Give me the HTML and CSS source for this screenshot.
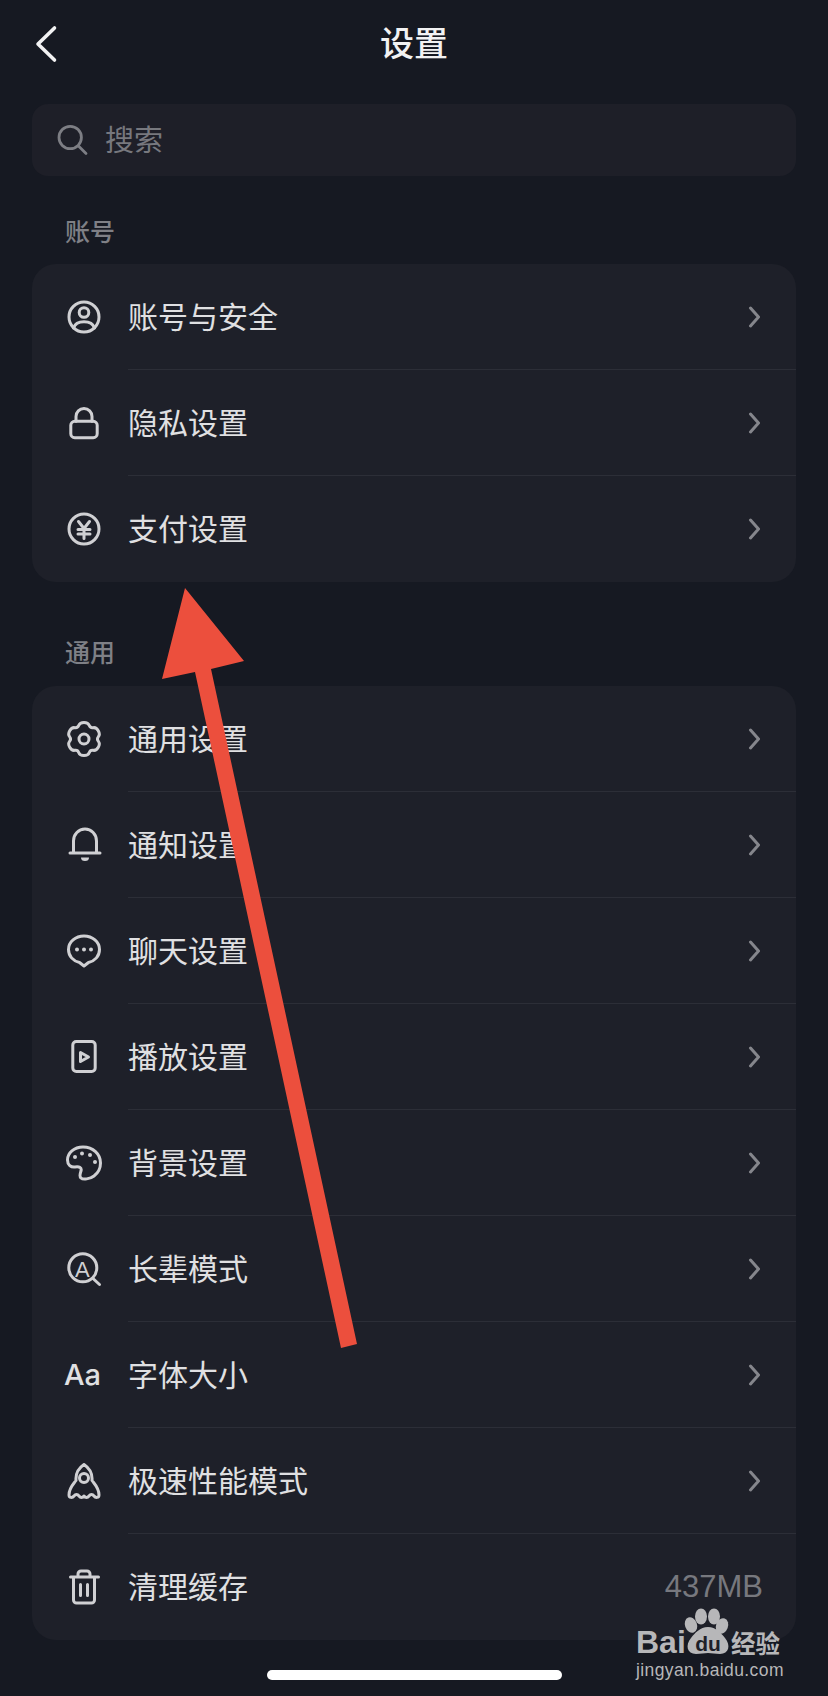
FILE: index.html
```html
<!DOCTYPE html>
<html lang="zh-CN">
<head>
  <meta charset="UTF-8">
  <meta name="viewport" content="width=device-width, initial-scale=1.0">
  <title>设置</title>
  <link rel="stylesheet" href="styles.css">
</head>
<body>
  <div class="page">
    <header class="top-bar">
      <svg class="back" viewBox="0 0 24 40"><path d="M20.500 4 L4 20 L20.500 36"/></svg>
      <h1 class="title">设置</h1>
    </header>

    <div class="search">
      <svg class="search-icon" viewBox="0 0 32 32"><circle cx="14.200" cy="13.500" r="11.200"/><path d="M22.500 22 L30 29.500"/></svg>
      <span class="search-text">搜索</span>
    </div>

    <div class="section-label">账号</div>
    <ul class="card">
      <li class="row">
        <svg class="icon" viewBox="0 0 36 36"><circle cx="18" cy="18" r="15"/><circle cx="18" cy="13.500" r="4.800"/><path d="M7.500 29 C9 24.500 13 22.800 18 22.800 S27 24.500 28.500 29"/></svg>
        <div class="row-body"><span class="row-label">账号与安全</span><svg class="chevron" viewBox="0 0 16 24"><path d="M6.500 3 L14.500 12 L6.500 21"/></svg></div>
      </li>
      <li class="row">
        <svg class="icon" viewBox="0 0 36 36"><rect x="4.800" y="16.300" width="26.400" height="16.400" rx="4"/><path d="M10 16.300 V11.500 a8 8 0 0 1 16 0 V16.300"/></svg>
        <div class="row-body"><span class="row-label">隐私设置</span><svg class="chevron" viewBox="0 0 16 24"><path d="M6.500 3 L14.500 12 L6.500 21"/></svg></div>
      </li>
      <li class="row">
        <svg class="icon" viewBox="0 0 36 36"><circle cx="18" cy="18" r="15"/><path d="M12.500 10.500 L18 17.500 L23.500 10.500 M12 18.500 H24 M12 23 H24 M18 17.500 V27.500"/></svg>
        <div class="row-body"><span class="row-label">支付设置</span><svg class="chevron" viewBox="0 0 16 24"><path d="M6.500 3 L14.500 12 L6.500 21"/></svg></div>
      </li>
    </ul>

    <div class="section-label section-label-gap">通用</div>
    <ul class="card">
      <li class="row">
        <svg class="icon" viewBox="0 0 36 36"><path d="M18 1.500 Q22.110 1.500 23.180 4.330 Q24.250 7.170 27.240 6.680 Q30.230 6.190 32.280 9.750 Q34.340 13.310 32.420 15.650 Q30.500 18 32.420 20.350 Q34.340 22.690 32.280 26.250 Q30.230 29.810 27.240 29.320 Q24.250 28.830 23.180 31.670 Q22.110 34.500 18 34.500 Q13.890 34.500 12.820 31.670 Q11.750 28.830 8.760 29.320 Q5.770 29.810 3.720 26.250 Q1.660 22.690 3.580 20.350 Q5.500 18 3.580 15.650 Q1.660 13.310 3.720 9.750 Q5.770 6.190 8.760 6.680 Q11.750 7.170 12.820 4.330 Q13.890 1.500 18 1.500 Z"/><circle cx="18" cy="18" r="5"/></svg>
        <div class="row-body"><span class="row-label">通用设置</span><svg class="chevron" viewBox="0 0 16 24"><path d="M6.500 3 L14.500 12 L6.500 21"/></svg></div>
      </li>
      <li class="row">
        <svg class="icon" viewBox="0 0 36 36"><path d="M7.500 26 V14 a11.500 12 0 0 1 23 0 V26 M4 26 H34"/><path class="solid" d="M15 30.500 H23 a4 3.500 0 0 1 -8 0 Z"/></svg>
        <div class="row-body"><span class="row-label">通知设置</span><svg class="chevron" viewBox="0 0 16 24"><path d="M6.500 3 L14.500 12 L6.500 21"/></svg></div>
      </li>
      <li class="row">
        <svg class="icon" viewBox="0 0 36 36"><path d="M13.500 29.500 C7 28 2.500 23 2.500 16.500 C2.500 9 9.500 3 18 3 S33.500 9 33.500 16.500 C33.500 23 29 28 22.500 29.500 L18 33 Z"/><circle class="solid" cx="11" cy="16.500" r="2"/><circle class="solid" cx="18" cy="16.500" r="2"/><circle class="solid" cx="25" cy="16.500" r="2"/></svg>
        <div class="row-body"><span class="row-label">聊天设置</span><svg class="chevron" viewBox="0 0 16 24"><path d="M6.500 3 L14.500 12 L6.500 21"/></svg></div>
      </li>
      <li class="row">
        <svg class="icon" viewBox="0 0 36 36"><rect x="6.800" y="2.500" width="22.400" height="30" rx="3.500"/><path d="M14.500 13.500 L22.500 18 L14.500 22.500 Z"/></svg>
        <div class="row-body"><span class="row-label">播放设置</span><svg class="chevron" viewBox="0 0 16 24"><path d="M6.500 3 L14.500 12 L6.500 21"/></svg></div>
      </li>
      <li class="row">
        <svg class="icon" viewBox="0 0 36 36"><path d="M17 2 C8 2 1.500 8 1.500 15 C1.500 20 5 22.500 9 22 C13 21.500 16 22 15 26 C14 29 13 31.500 15 33 C17 35 24 34 28 31 C32 28 34.500 23 34.500 18 C34.500 9 27 2 17 2 Z"/><circle class="solid" cx="9" cy="12" r="2"/><circle class="solid" cx="16" cy="8.500" r="2"/><circle class="solid" cx="24" cy="10" r="2"/><circle class="solid" cx="29" cy="17" r="2"/></svg>
        <div class="row-body"><span class="row-label">背景设置</span><svg class="chevron" viewBox="0 0 16 24"><path d="M6.500 3 L14.500 12 L6.500 21"/></svg></div>
      </li>
      <li class="row">
        <svg class="icon" viewBox="0 0 36 36"><circle cx="16.800" cy="16.800" r="14"/><path d="M27 27.500 L33.500 33.500"/><text class="icon-letter" x="16.300" y="25.500" text-anchor="middle">A</text></svg>
        <div class="row-body"><span class="row-label">长辈模式</span><svg class="chevron" viewBox="0 0 16 24"><path d="M6.500 3 L14.500 12 L6.500 21"/></svg></div>
      </li>
      <li class="row">
        <div class="icon icon-text">Aa</div>
        <div class="row-body"><span class="row-label">字体大小</span><svg class="chevron" viewBox="0 0 16 24"><path d="M6.500 3 L14.500 12 L6.500 21"/></svg></div>
      </li>
      <li class="row">
        <svg class="icon" viewBox="0 0 36 36"><path d="M18 1.500 C24 5.500 26.500 11 26 17.500 C28.500 21 33 25 33 32 C33 35 29.500 35 28 33 C26.500 31 24.500 31 23 33 C21.500 35 19.500 35 18 33 C16.500 35 14.500 35 13 33 C11.500 31 9.500 31 8 33 C6.500 35 3 35 3 32 C3 25 7.500 21 10 17.500 C9.500 11 12 5.500 18 1.500 Z"/><circle cx="18" cy="15" r="4.500"/></svg>
        <div class="row-body"><span class="row-label">极速性能模式</span><svg class="chevron" viewBox="0 0 16 24"><path d="M6.500 3 L14.500 12 L6.500 21"/></svg></div>
      </li>
      <li class="row">
        <svg class="icon" viewBox="0 0 36 36"><path d="M4.500 8 H32.500 M12 8 V5 a3 3 0 0 1 3 -3 H21 a3 3 0 0 1 3 3 V8 M7.500 8 V31 a3 3 0 0 0 3 3 H25.500 a3 3 0 0 0 3 -3 V8 M14.500 15.500 V26.500 M21.500 15.500 V26.500"/></svg>
        <div class="row-body row-last"><span class="row-label">清理缓存</span><span class="size">437MB</span></div>
      </li>
    </ul>

    <!-- red arrow drawn over the list -->
    <svg class="arrow" viewBox="0 0 828 1696"><polygon points="185,588 244,661 211,669 357,1344 341,1348 195,672 162,679"/></svg>

    <!-- watermark -->
    <svg class="watermark" viewBox="0 0 160 90">
      <text class="wm-bai" x="6" y="52">Bai</text>
      <ellipse cx="61" cy="24" rx="6" ry="8" transform="rotate(-20 61 24)"/>
      <ellipse cx="71" cy="15.500" rx="6" ry="8"/>
      <ellipse cx="84" cy="15.500" rx="6" ry="8"/>
      <ellipse cx="92" cy="25" rx="6" ry="8" transform="rotate(20 92 25)"/>
      <path d="M78 26 C86 26 91 32 95 37 C101 44 99 53 90 53 C85 53 82 52 78 52 C74 52 71 53 66 53 C57 53 55 44 61 37 C65 32 70 26 78 26 Z"/>
      <text class="wm-du" x="78" y="50" text-anchor="middle">du</text>
      <text class="wm-cn" x="101" y="52">经验</text>
      <text class="wm-url" x="6" y="75">jingyan.baidu.com</text>
    </svg>

    <div class="home-bar"></div>
  </div>
</body>
</html>
```

FILE: styles.css
```css
html, body {
  margin: 0;
  padding: 0;
  height: 100%;
  background-color: #161922;
  overflow: hidden;
  font-family: "Noto Sans CJK SC", "Liberation Sans", sans-serif;
  color: #e0e0e2;
}

.page {
  position: relative;
  width: 828px;
  height: 1696px;
  padding: 0 32px;
  box-sizing: border-box;
}

.top-bar {
  height: 104px;
  margin: 0 -32px;
  display: flex;
  justify-content: center;
  align-items: flex-start;
  position: relative;
}

.back {
  position: absolute;
  left: 34px;
  top: 24px;
  width: 24px;
  height: 40px;
  fill: none;
  stroke: #f2f2f3;
  stroke-width: 3.6;
  stroke-linecap: round;
  stroke-linejoin: round;
}

.title {
  margin: 0;
  margin-top: 18px;
  font-size: 34px;
  line-height: 48px;
  font-weight: 500;
  color: #f2f2f3;
}

.search {
  height: 72px;
  padding-left: 24px;
  display: flex;
  align-items: center;
  gap: 17px;
  background-color: #1e1f28;
  border-radius: 16px;
  font-size: 29px;
  color: #77787e;
}

.search-text {
  margin-bottom: 4px;
}

.search-icon {
  width: 32px;
  height: 32px;
  fill: none;
  stroke: #7d7e84;
  stroke-width: 2.8;
  stroke-linecap: round;
}

.section-label {
  height: 88px;
  padding: 36px 0 0 33px;
  box-sizing: border-box;
  font-size: 25px;
  font-weight: 500;
  line-height: 36px;
  color: #7f8086;
}

.section-label-gap {
  height: 104px;
  padding-top: 51px;
}

.card {
  list-style: none;
  margin: 0;
  padding: 0;
  background-color: #1e2029;
  border-radius: 24px;
}

.row {
  height: 106px;
  padding-left: 34px;
  display: flex;
  align-items: center;
}

.icon {
  width: 36px;
  height: 36px;
  flex-shrink: 0;
  fill: none;
  stroke: #d0d0d3;
  stroke-width: 3;
  stroke-linecap: round;
  stroke-linejoin: round;
}

.icon .solid {
  fill: #d0d0d3;
  stroke: none;
}

.icon-letter {
  font-family: "Liberation Sans", sans-serif;
  font-size: 22px;
  fill: #d0d0d3;
  stroke: none;
}

.icon-text {
  font-family: "Inter", "Liberation Sans", sans-serif;
  font-size: 29px;
  font-weight: 500;
  line-height: 36px;
  color: #e0e0e2;
  text-indent: -2px;
  white-space: nowrap;
}

.row-body {
  flex: 1;
  height: 100%;
  margin-left: 26px;
  padding-right: 36px;
  box-sizing: border-box;
  display: flex;
  justify-content: space-between;
  align-items: center;
  border-bottom: 1px solid #2c2e37;
  font-size: 30px;
}

.row-last {
  padding-right: 33px;
}

.row:last-child .row-body {
  border-bottom: none;
}

.row-label {
  margin-bottom: 4px;
}

.chevron {
  width: 16px;
  height: 24px;
  fill: none;
  stroke: #85868c;
  stroke-width: 3;
  stroke-linecap: round;
  stroke-linejoin: round;
}

.size {
  font-family: "Liberation Sans", sans-serif;
  font-size: 31px;
  color: #77787e;
}

.arrow {
  position: absolute;
  left: 0;
  top: 0;
  width: 828px;
  height: 1696px;
  fill: #ec4f3d;
  pointer-events: none;
}

.watermark {
  position: absolute;
  left: 630px;
  top: 1601px;
  width: 160px;
  height: 90px;
  fill: #b7b7b9;
}

.wm-bai {
  font-family: "Liberation Sans", sans-serif;
  font-size: 32px;
  font-weight: 700;
}

.wm-du {
  font-family: "Liberation Sans", sans-serif;
  font-size: 21px;
  font-weight: 700;
  fill: #1e2029;
}

.wm-cn {
  font-size: 24.500px;
  font-weight: 700;
}

.wm-url {
  font-family: "Liberation Sans", sans-serif;
  font-size: 17.500px;
  letter-spacing: 0.400px;
}

.home-bar {
  position: absolute;
  left: 267px;
  top: 1670px;
  width: 295px;
  height: 10px;
  border-radius: 5px;
  background-color: #fff;
}
```
